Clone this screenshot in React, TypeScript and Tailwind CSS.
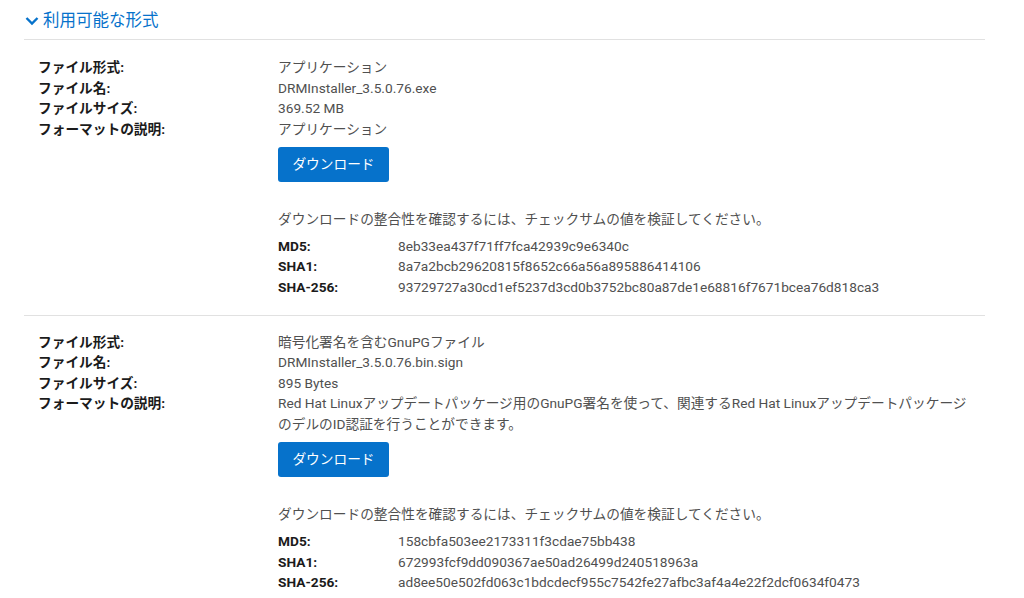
import React from "react";

const font = { fontFamily: 'Roboto, "Noto Sans CJK JP", sans-serif' };

type Row = { label: string; value: React.ReactNode };
type Section = {
  rows: Row[];
  md5: string;
  sha1: string;
  sha256: string;
};

const sections: Section[] = [
  {
    rows: [
      { label: "ファイル形式:", value: "アプリケーション" },
      { label: "ファイル名:", value: "DRMInstaller_3.5.0.76.exe" },
      { label: "ファイルサイズ:", value: "369.52 MB" },
      { label: "フォーマットの説明:", value: "アプリケーション" },
    ],
    md5: "8eb33ea437f71ff7fca42939c9e6340c",
    sha1: "8a7a2bcb29620815f8652c66a56a895886414106",
    sha256: "93729727a30cd1ef5237d3cd0b3752bc80a87de1e68816f7671bcea76d818ca3",
  },
  {
    rows: [
      { label: "ファイル形式:", value: "暗号化署名を含むGnuPGファイル" },
      { label: "ファイル名:", value: "DRMInstaller_3.5.0.76.bin.sign" },
      { label: "ファイルサイズ:", value: "895 Bytes" },
      {
        label: "フォーマットの説明:",
        value: (
          <>
            Red Hat Linuxアップデートパッケージ用のGnuPG署名を使って、関連するRed Hat Linuxアップデートパッケージ
            <br />
            のデルのID認証を行うことができます。
          </>
        ),
      },
    ],
    md5: "158cbfa503ee2173311f3cdae75bb438",
    sha1: "672993fcf9dd090367ae50ad26499d240518963a",
    sha256: "ad8ee50e502fd063c1bdcdecf955c7542fe27afbc3af4a4e22f2dcf0634f0473",
  },
];

function FileSection({ s, first, last }: { s: Section; first: boolean; last: boolean }) {
  return (
    <div
      className={`${first ? "pt-[17px]" : "pt-[16px]"} pb-[17px] ${
        last ? "" : "border-b border-[#e1e1e1]"
      }`}
    >
      <div className="grid grid-cols-[240px_1fr] pl-[14px] text-[13.7px] leading-[20.5px]">
        {s.rows.map((r, i) => (
          <React.Fragment key={i}>
            <div className="font-bold text-[#1b1b1b]">{r.label}</div>
            <div className="text-[#505050]">{r.value}</div>
          </React.Fragment>
        ))}
      </div>
      <div className="pl-[254px]">
        <button className="mt-[8px] h-[35px] w-[111px] rounded-[3px] bg-[#0672cb] text-[13.7px] text-white">
          ダウンロード
        </button>
        <p className="mt-[27px] text-[13.7px] leading-[20.5px] text-[#505050]">
          ダウンロードの整合性を確認するには、チェックサムの値を検証してください。
        </p>
        <div className="mt-[6px] grid grid-cols-[120px_1fr] text-[13.7px] leading-[20.75px]">
          <div className="font-bold text-[#1b1b1b]">MD5:</div>
          <div className="text-[#505050]">{s.md5}</div>
          <div className="font-bold text-[#1b1b1b]">SHA1:</div>
          <div className="text-[#505050]">{s.sha1}</div>
          <div className="font-bold text-[#1b1b1b]">SHA-256:</div>
          <div className="text-[#505050]">{s.sha256}</div>
        </div>
      </div>
    </div>
  );
}

export default function App() {
  return (
    <div className="min-h-[598px] bg-white" style={font}>
      <div className="ml-[24px] w-[961px]">
        <div className="flex h-[40px] items-center border-b border-[#e1e1e1] pt-[3px]">
          <svg width="14" height="10" viewBox="0 0 14 10" className="ml-[1px] mr-[4px]">
            <path d="M1.5 2 L7 7.5 L12.5 2" fill="none" stroke="#0672cb" strokeWidth="2.4" />
          </svg>
          <span className="text-[16.5px] text-[#0672cb]">利用可能な形式</span>
        </div>
        {sections.map((s, i) => (
          <FileSection key={i} s={s} first={i === 0} last={i === sections.length - 1} />
        ))}
      </div>
    </div>
  );
}
